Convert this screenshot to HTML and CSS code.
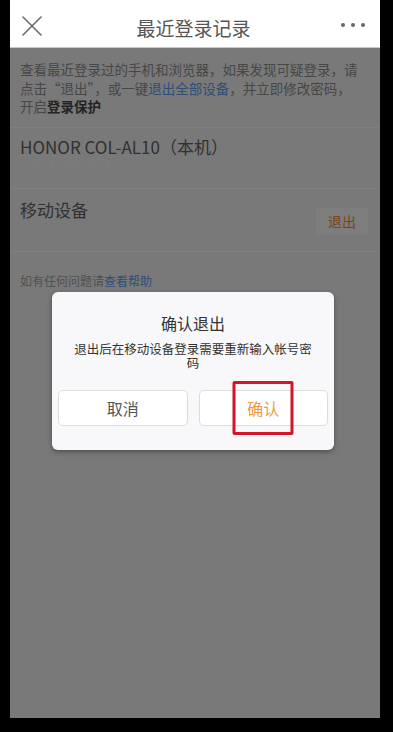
FILE: index.html
```html
<!DOCTYPE html>
<html lang="zh-CN">
<head>
<meta charset="utf-8">
<title>最近登录记录</title>
<link rel="stylesheet" href="styles.css">
</head>
<body>
<div class="phone">
  <div class="screen">
    <header class="topbar">
      <svg class="close" width="20" height="20" viewBox="0 0 20 20" aria-hidden="true">
        <path d="M1 1 L19 19 M19 1 L1 19" stroke="#6a6a6a" stroke-width="1.6" fill="none" stroke-linecap="round"/>
      </svg>
      <h1 class="title">最近登录记录</h1>
      <div class="more"><span></span><span></span><span></span></div>
    </header>
    <main class="page">
      <p class="intro">查看最近登录过的手机和浏览器，如果发现可疑登录，请点击“退出”，或一键<a class="link">退出全部设备</a>，并立即修改密码，开启<b class="strong">登录保护</b></p>
      <div class="device">
        <div class="device-name">HONOR COL-AL10（本机）</div>
        <div class="device-meta">· · · · · ·</div>
      </div>
      <div class="device device-row">
        <div class="device-name">移动设备</div>
        <button class="logout">退出</button>
      </div>
      <p class="help">如有任何问题请<a class="link">查看帮助</a></p>

      <div class="mask"></div>
      <div class="dialog">
        <div class="dialog-title">确认退出</div>
        <div class="dialog-msg">退出后在移动设备登录需要重新输入帐号密码</div>
        <div class="dialog-actions">
          <button class="btn btn-cancel">取消</button>
          <button class="btn btn-ok">确认<span class="highlight"></span></button>
        </div>
      </div>
    </main>
  </div>
</div>
</body>
</html>
```
FILE: styles.css
```css
* { box-sizing: border-box; }
html, body { margin: 0; padding: 0; }
body {
  background: #000;
  width: 393px;
  height: 732px;
  overflow: hidden;
  font-family: "Noto Sans CJK SC", "Noto Sans", sans-serif;
}
.phone {
  padding: 0 13px 14px 10px;
  height: 732px;
}
.screen {
  width: 370px;
  height: 718px;
  display: flex;
  flex-direction: column;
  background: #f3f3f3;
  overflow: hidden;
}
.topbar {
  height: 48px;
  flex: none;
  background: #fff;
  display: grid;
  grid-template-columns: 1fr auto 1fr;
  align-items: center;
  padding: 8px 15px 0 12px;
  border-bottom: 1px solid #c8c8c8;
}
.close { display: block; margin-top: -4px; }
.title {
  margin: 0;
  font-size: 19px;
  font-weight: 400;
  color: #555;
  line-height: 24px;
  margin-top: 0;
}
.more {
  justify-self: end;
  display: flex;
  gap: 6px;
  margin-top: -6px;
}
.more span {
  width: 4px;
  height: 4px;
  border-radius: 50%;
  background: #666;
}
.page {
  flex: 1;
  position: relative;
}
.intro {
  margin: 0;
  padding: 12px 20px 11px 10px;
  font-size: 13.5px;
  line-height: 18.5px;
  color: #8e8e8e;
}
.link { color: #5f9cec; text-decoration: none; }
.strong { color: #474747; font-weight: 700; }
.device {
  border-top: 1px solid #ffffff;
  padding: 8px 12px 16px 10px;
}
.device-name {
  font-size: 17px;
  line-height: 22px;
  color: #626262;
}
.device-meta {
  font-size: 10px;
  line-height: 14px;
  color: #ffffff;
  padding-left: 12px;
  letter-spacing: 1px;
}
.device-row {
  display: flex;
  justify-content: space-between;
  align-items: flex-start;
  padding: 10px 12px 17px 10px;
}
.logout {
  margin-top: 9px;
  width: 52px;
  height: 26px;
  border: 1px solid #ffffff;
  border-radius: 2px;
  background: #fafafa;
  color: #f78a2a;
  font-family: inherit;
  font-size: 14px;
  padding: 0;
}
.help {
  margin: 0;
  border-top: 1px solid #ffffff;
  padding: 21px 10px 0;
  font-size: 12px;
  line-height: 16px;
  color: #a2a2a2;
}
.mask {
  position: absolute;
  inset: 0;
  background: rgba(0, 0, 0, 0.5);
}
.dialog {
  position: absolute;
  top: 244px;
  left: 42px;
  width: 282px;
  height: 158px;
  background: #f8f8fa;
  border-radius: 6px;
  box-shadow: 0 2px 5px rgba(0, 0, 0, 0.35);
  display: flex;
  flex-direction: column;
  align-items: center;
  padding: 21px 6px 0;
}
.dialog-title {
  font-size: 16px;
  line-height: 20px;
  color: #333;
}
.dialog-msg {
  margin-top: 9px;
  padding: 0 12px;
  font-size: 12.5px;
  line-height: 13.5px;
  color: #333;
  text-align: center;
}
.dialog-actions {
  margin-top: 21px;
  width: 100%;
  display: flex;
  gap: 11px;
}
.btn {
  position: relative;
  flex: 1;
  height: 36px;
  background: #fff;
  border: 1px solid #dcdcdc;
  border-radius: 5px;
  font-family: inherit;
  font-size: 16px;
  padding: 0;
}
.btn-cancel { color: #555; }
.btn-ok { color: #ef9a3e; }
.highlight {
  position: absolute;
  left: 50%;
  top: -10px;
  width: 61px;
  height: 54px;
  transform: translateX(-50%);
  border: 3px solid #d3142b;
  border-radius: 2px;
}
```
